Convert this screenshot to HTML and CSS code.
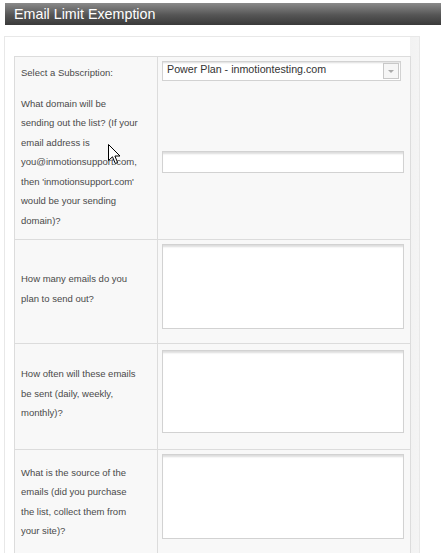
FILE: index.html
```html
<!DOCTYPE html>
<html>
<head>
<meta charset="utf-8">
<link rel="stylesheet" href="styles.css">
</head>
<body>
<div class="header">Email Limit Exemption</div>
<div class="box">
  <div class="form">
    <div class="cell label row1">
      <p class="first">Select a Subscription:</p>
      <p>What domain will be sending out the list? (If your email address is you@inmotionsupport.com, then 'inmotionsupport.com' would be your sending domain)?</p>
    </div>
    <div class="cell field row1">
      <div class="select"><span class="select-text">Power Plan - inmotiontesting.com</span><span class="select-btn"><span class="tri"></span></span></div>
      <div class="input"></div>
    </div>
    <div class="cell label mid row2"><p>How many emails do you plan to send out?</p></div>
    <div class="cell field row2"><div class="textarea"></div></div>
    <div class="cell label mid row3"><p>How often will these emails be sent (daily, weekly, monthly)?</p></div>
    <div class="cell field row3"><div class="textarea t3"></div></div>
    <div class="cell label mid row4"><p>What is the source of the emails (did you purchase the list, collect them from your site)?</p></div>
    <div class="cell field row4"><div class="textarea"></div></div>
  </div>
  <svg class="cursor" width="13" height="21" viewBox="0 0 13 21"><path d="M0.5 0.5 L0.5 16.5 L4.5 12.8 L7.3 19.5 L9.6 18.5 L6.9 12 L12 12 Z" fill="#fff" stroke="#000" stroke-width="1" stroke-linejoin="miter"/></svg>
</div>
</body>
</html>
```
FILE: styles.css
```css
html, body { margin: 0; padding: 0; background: #fff; }
body { font-family: "Liberation Sans", Arial, sans-serif; position: relative; height: 553px; overflow: hidden; }
.header {
  margin: 3px 0 0 5px;
  height: 22px;
  line-height: 22px;
  padding-left: 9px;
  color: #fff;
  font-size: 14.3px;
  background: linear-gradient(#8a8a8a, #555 55%, #3a3a3a);
}
.box {
  margin: 11px 0 0 4px;
  width: 416px;
  border: 1px solid #e8e8e8;
  border-bottom: none;
  padding: 19px 0 0 9px;
  background: linear-gradient(to right, #fff 0, #fff 405px, #f2f2f2 405px, #f4f4f4 100%);
  height: 600px;
  box-sizing: border-box;
}
.form {
  display: grid;
  grid-template-columns: 143px 253px;
  border-top: 1px solid #dcdcdc;
  border-left: 1px solid #dcdcdc;
  width: 396px;
  background: #f8f8f8;
}
.cell {
  border-right: 1px solid #dcdcdc;
  border-bottom: 1px solid #dcdcdc;
  box-sizing: border-box;
}
.row1 { height: 183px; }
.row2 { height: 104px; }
.row3 { height: 106px; }
.row4 { height: 110px; }
.label {
  padding: 6px 17px 0 6px;
  font-size: 9.5px;
  color: #4a4a4a;
  line-height: 19.5px;
}
.label p { margin: 0; }
.label p.first { margin-bottom: 11px; }
.mid { display: flex; align-items: center; padding-top: 0; padding-bottom: 6px; }
.field { padding: 4px 0 0 4px; }
.row3.field { padding-top: 6px; }
.select {
  width: 239px;
  height: 20px;
  box-sizing: border-box;
  border: 1px solid #d2d2d2;
  background: #fff;
  box-shadow: inset 0 2px 2px -1px #ddd;
  display: flex;
  align-items: center;
  justify-content: space-between;
}
.select-text { font-size: 10.7px; color: #333; padding-left: 4px; line-height: 14px; margin-top: -4px; }
.select-btn {
  width: 16px;
  height: 16px;
  margin-right: 1px;
  border: 1px solid #c8c8c8;
  box-sizing: border-box;
  background: #f6f6f6;
  display: flex;
  align-items: center;
  justify-content: center;
}
.tri { width: 0; height: 0; border-left: 3px solid transparent; border-right: 3px solid transparent; border-top: 3px solid #aaa; }
.input {
  margin-top: 70px;
  width: 242px;
  height: 22px;
  box-sizing: border-box;
  border: 1px solid #d2d2d2;
  background: #fff;
  box-shadow: inset 0 3px 2px -1px #ddd;
}
.textarea {
  width: 242px;
  height: 85px;
  box-sizing: border-box;
  border: 1px solid #d2d2d2;
  background: #fff;
  box-shadow: inset 0 3px 2px -1px #ddd;
}
.textarea.t3 { height: 83px; }
.cursor { position: absolute; left: 108px; top: 144px; }
```
